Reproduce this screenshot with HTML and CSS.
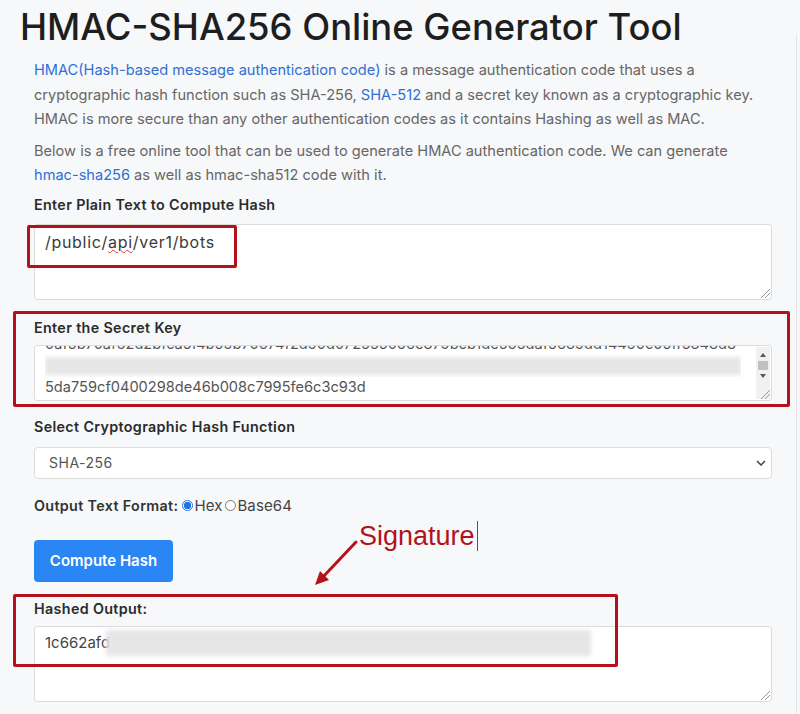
FILE: index.html
```html
<!DOCTYPE html>
<html>
<head>
<meta charset="utf-8">
<link rel="stylesheet" href="styles.css">
</head>
<body>
<div class="page">
  <h1 class="title">HMAC-SHA256 Online Generator Tool</h1>
  <div class="content">
    <p class="intro"><a href="#">HMAC(Hash-based message authentication code)</a> is a message authentication code that uses a cryptographic hash function such as SHA-256, <a href="#">SHA-512</a> and a secret key known as a cryptographic key. HMAC is more secure than any other authentication codes as it contains Hashing as well as MAC.</p>
    <p class="intro intro2">Below is a free online tool that can be used to generate HMAC authentication code. We can generate <a href="#">hmac-sha256</a> as well as hmac-sha512 code with it.</p>

    <div class="label l1">Enter Plain Text to Compute Hash</div>
    <div class="field tall">
      <div class="fieldtext plain">/public/<span class="spell">api</span>/ver1/bots</div>
      <span class="grip"></span>
    </div>

    <div class="label l2">Enter the Secret Key</div>
    <div class="field key">
      <div class="keylines">
        <div class="kline clipped">0af5b70af62d2bfca5f4b59b70674f2d90d072555066e879bcb1de565daf5689dd14490c05ff5848d8</div>
        <div class="kline blurline"><span class="blur wide"></span></div>
        <div class="kline">5da759cf0400298de46b008c7995fe6c3c93d</div>
      </div>
      <div class="scrollbar">
        <span class="sarrow up"></span>
        <span class="thumb"></span>
        <span class="sarrow down"></span>
      </div>
      <span class="grip"></span>
    </div>

    <div class="label l3">Select Cryptographic Hash Function</div>
    <div class="select">
      <span>SHA-256</span>
      <svg class="chev" width="10" height="6" viewBox="0 0 10 6"><path d="M1 1l4 4 4-4" fill="none" stroke="#444" stroke-width="1.5"/></svg>
    </div>

    <div class="format">
      <b>Output Text Format:</b>
      <span class="radio on"></span><span class="opt">Hex</span>
      <span class="radio"></span><span class="opt">Base64</span>
    </div>

    <button class="btn">Compute Hash</button>

    <div class="label l4">Hashed Output:</div>
    <div class="field tall out">
      <div class="fieldtext">1c662afd<span class="blur outblur"></span></div>
      <span class="grip"></span>
    </div>
  </div>

  <div class="mark m1"></div>
  <div class="mark m2"></div>
  <div class="mark m3"></div>
  <div class="sig">Signature<span class="caret"></span></div>
  <svg class="arrow" width="50" height="50" viewBox="0 0 50 50">
    <path d="M44 4 L10 40" stroke="#b3121a" stroke-width="3" fill="none" stroke-linecap="round"/>
    <path d="M3 47 L8 33 L17 42 Z" fill="#b3121a"/>
  </svg>
  <div class="edge"></div>
</div>
</body>
</html>
```

FILE: styles.css
```css
html, body {
  margin: 0;
  padding: 0;
  background: #f7f8fa;
}
body {
  font-family: Inter, "Open Sans", sans-serif;
  color: #555;
}
.page {
  position: relative;
  width: 800px;
  height: 714px;
  overflow: hidden;
}
.title {
  margin: 0;
  padding: 4px 0 0 20px;
  font-size: 36.4px;
  line-height: 46px;
  font-weight: 450;
  color: #1e1e1e;
  letter-spacing: 0;
}
.content {
  padding: 0 28px 0 34px;
}
.intro {
  margin: 8px 0 0;
  font-size: 14.6px;
  line-height: 24.5px;
  color: #666;
}
.intro2 {
  margin-top: 7px;
}
.intro a {
  color: #2f6fd6;
  text-decoration: none;
}
.label {
  font-size: 14.3px;
  font-weight: 600;
  color: #2b2b2b;
  line-height: 20px;
  letter-spacing: 0.35px;
}
.l1 { margin-top: 7px; }
.l2 { margin-top: 18px; }
.l3 { margin-top: 16px; }
.l4 { margin-top: 17px; }
.field {
  position: relative;
  background: #fff;
  border: 1px solid #dcdcdc;
  border-radius: 3px;
  box-sizing: border-box;
}
.tall {
  height: 76px;
  margin-top: 9px;
}
.key {
  height: 56px;
  margin-top: 7px;
  overflow: hidden;
}
.fieldtext {
  padding: 6px 10px;
  font-size: 15px;
  line-height: 22px;
  color: #444;
  display: flex;
  align-items: center;
}
.plain {
  font-size: 16px;
  letter-spacing: 0.7px;
  color: #3a3a3a;
}
.spell {
  text-decoration: underline wavy #d33;
  text-decoration-thickness: 1px;
}
.grip {
  position: absolute;
  right: 1px;
  bottom: 1px;
  width: 9px;
  height: 9px;
  background: linear-gradient(135deg, transparent 45%, #999 45%, #999 52%, transparent 52%, transparent 70%, #999 70%, #999 77%, transparent 77%);
}
.keylines {
  margin-top: -12px;
  padding: 0 30px 0 10px;
  font-size: 14.6px;
  line-height: 21px;
  color: #555;
}
.kline {
  height: 21px;
  white-space: nowrap;
  overflow: hidden;
}
.blurline {
  height: 22px;
  display: flex;
  align-items: center;
}
.blur {
  display: inline-block;
  background: #e6e6e6;
  filter: blur(2px);
}
.wide {
  width: 100%;
  height: 18px;
}
.scrollbar {
  position: absolute;
  right: 1px;
  top: 1px;
  width: 14px;
  bottom: 1px;
  background: #f1f1f1;
}
.sarrow {
  position: absolute;
  left: 4px;
  width: 0;
  height: 0;
  border-left: 3px solid transparent;
  border-right: 3px solid transparent;
}
.sarrow.up { top: 6px; border-bottom: 4px solid #555; }
.sarrow.down { top: 27px; border-top: 4px solid #555; }
.thumb {
  position: absolute;
  left: 2px;
  right: 2px;
  top: 14px;
  height: 9px;
  background: #c1c1c1;
}
.select {
  margin-top: 10px;
  height: 32px;
  background: #fff;
  border: 1px solid #dcdcdc;
  border-radius: 4px;
  box-sizing: border-box;
  display: flex;
  align-items: center;
  justify-content: space-between;
  padding: 0 5px 0 14px;
  font-size: 14px;
  color: #555;
  letter-spacing: 0.5px;
}
.format {
  margin-top: 17px;
  font-size: 14.3px;
  line-height: 20px;
  color: #333;
  display: flex;
  align-items: center;
  letter-spacing: 0.35px;
}
.format b {
  font-weight: 600;
  margin-right: 4px;
}
.radio {
  width: 9px;
  height: 9px;
  border: 1px solid #777;
  border-radius: 50%;
  box-sizing: content-box;
  margin-right: 1px;
  background: #fff;
}
.radio.on {
  border-color: #1a73e8;
  background: radial-gradient(circle, #1a73e8 55%, #fff 60%);
}
.opt {
  margin-right: 3px;
  color: #444;
  font-size: 15px;
  letter-spacing: 0.1px;
}
.btn {
  display: block;
  margin-top: 24px;
  width: 139px;
  height: 42px;
  border: none;
  border-radius: 4px;
  background: #2b86f5;
  color: #fff;
  font-family: Inter, "Open Sans", sans-serif;
  font-size: 15px;
  font-weight: 600;
}
.out {
  margin-top: 7px;
}
.out .fieldtext {
  padding-top: 3px;
}
.outblur {
  width: 485px;
  height: 26px;
  margin-left: -4px;
}
.mark {
  position: absolute;
  border: 3px solid #b3121a;
  border-radius: 2px;
  box-sizing: border-box;
}
.m1 { left: 27px; top: 225px; width: 210px; height: 43px; }
.m2 { left: 13px; top: 311px; width: 777px; height: 96px; }
.m3 { left: 13px; top: 594px; width: 605px; height: 73px; }
.sig {
  position: absolute;
  left: 359px;
  top: 519px;
  font-family: "Liberation Sans", Arial, sans-serif;
  font-size: 27px;
  line-height: 34px;
  color: #b3121a;
  display: flex;
  align-items: center;
}
.caret {
  display: inline-block;
  width: 1px;
  height: 30px;
  background: #555;
  margin-left: 2px;
}
.arrow {
  position: absolute;
  left: 312px;
  top: 538px;
}
.edge {
  position: absolute;
  right: 3px;
  top: 34px;
  bottom: 0;
  width: 1px;
  background: #e6e6e6;
}
```
